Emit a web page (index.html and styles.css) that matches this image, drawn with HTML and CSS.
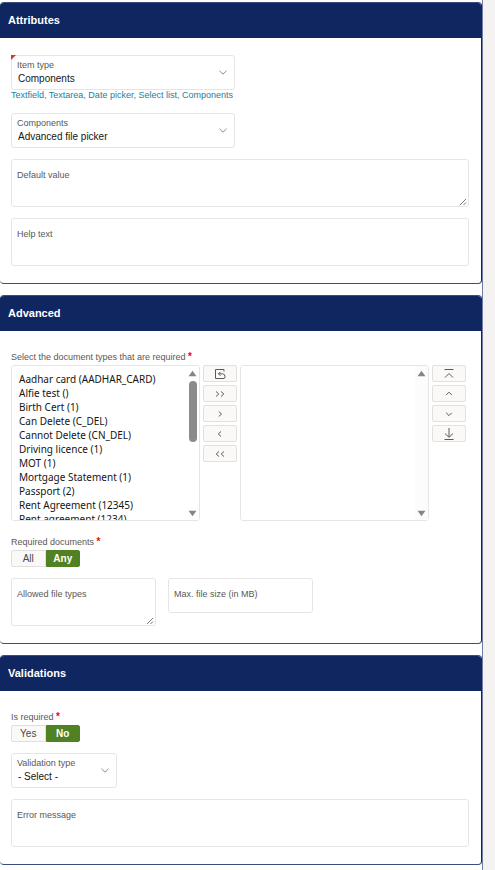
FILE: index.html
```
<!DOCTYPE html>
<html lang="en">
<head>
  <meta charset="UTF-8">
  <title>Item attributes</title>
  <link rel="stylesheet" href="styles.css">
</head>
<body>
  <form class="panel">

    <!-- Attributes -->
    <section class="region">
      <h2>Attributes</h2>
      <div class="region-body">
        <div class="field medium required">
          <label for="itemType">Item type</label>
          <select id="itemType"><option>Components</option></select>
          <svg class="chevron" viewBox="0 0 8 5"><path d="M0.5 0.8 L4 4.2 L7.5 0.8"/></svg>
        </div>
        <p class="help">Textfield, Textarea, Date picker, Select list, Components</p>
        <div class="field medium">
          <label for="components">Components</label>
          <select id="components"><option>Advanced file picker</option></select>
          <svg class="chevron" viewBox="0 0 8 5"><path d="M0.5 0.8 L4 4.2 L7.5 0.8"/></svg>
        </div>
        <div class="field tall">
          <label for="defaultValue">Default value</label>
          <textarea id="defaultValue"></textarea>
          <svg class="grip" viewBox="0 0 8 8"><path d="M1 7 L7 1 M4.5 7 L7 4.5"/></svg>
        </div>
        <div class="field tall last">
          <label for="helpText">Help text</label>
          <textarea id="helpText"></textarea>
        </div>
      </div>
    </section>

    <!-- Advanced -->
    <section class="region">
      <h2>Advanced</h2>
      <div class="region-body captioned">
        <label class="caption" for="docTypes">Select the document types that are required <span class="star">*</span></label>
        <div class="shuttle">
          <div class="list">
            <select id="docTypes" multiple>
              <option>Aadhar card (AADHAR_CARD)</option>
              <option>Alfie test ()</option>
              <option>Birth Cert (1)</option>
              <option>Can Delete (C_DEL)</option>
              <option>Cannot Delete (CN_DEL)</option>
              <option>Driving licence (1)</option>
              <option>MOT (1)</option>
              <option>Mortgage Statement (1)</option>
              <option>Passport (2)</option>
              <option>Rent Agreement (12345)</option>
              <option>Rent agreement (1234)</option>
            </select>
            <div class="scrollbar">
              <svg viewBox="0 0 8 6"><path d="M4 0.5 L7.5 5.5 H0.5 Z"/></svg>
              <span class="thumb"></span>
              <svg class="down" viewBox="0 0 8 6"><path d="M4 5.5 L7.5 0.5 H0.5 Z"/></svg>
            </div>
          </div>
          <div class="controls">
            <button type="button" aria-label="Reset">
              <svg viewBox="0 0 12 12"><path d="M10 3.5 V1.5 H1.5 V10.5 H10 Q11 10.5 11 8.5 Q11 5.8 8.5 5.8 H4.5 M6.5 3.8 L4.5 5.8 L6.5 7.8"/></svg>
            </button>
            <button type="button" aria-label="Move all">
              <svg viewBox="0 0 12 12"><path d="M2 3.5 L4.8 6 L2 8.5 M7 3.5 L9.8 6 L7 8.5"/></svg>
            </button>
            <button type="button" aria-label="Move">
              <svg viewBox="0 0 12 12"><path d="M4.8 3.5 L7.5 6 L4.8 8.5"/></svg>
            </button>
            <button type="button" aria-label="Remove">
              <svg viewBox="0 0 12 12"><path d="M7 3.5 L4.3 6 L7 8.5"/></svg>
            </button>
            <button type="button" aria-label="Remove all">
              <svg viewBox="0 0 12 12"><path d="M5 3.5 L2.2 6 L5 8.5 M10 3.5 L7.2 6 L10 8.5"/></svg>
            </button>
          </div>
          <div class="list">
            <select id="chosenTypes" multiple aria-label="Selected document types"></select>
            <div class="scrollbar track">
              <svg viewBox="0 0 8 6"><path d="M4 0.5 L7.5 5.5 H0.5 Z"/></svg>
              <svg class="down" viewBox="0 0 8 6"><path d="M4 5.5 L7.5 0.5 H0.5 Z"/></svg>
            </div>
          </div>
          <div class="controls">
            <button type="button" aria-label="Top">
              <svg viewBox="0 0 12 12"><path d="M1.5 1.5 H10.5 M2 9.5 L6 5.5 L10 9.5"/></svg>
            </button>
            <button type="button" aria-label="Up">
              <svg viewBox="0 0 12 12"><path d="M3.2 7 L6 4.2 L8.8 7"/></svg>
            </button>
            <button type="button" aria-label="Down">
              <svg viewBox="0 0 12 12"><path d="M3.2 4.8 L6 7.6 L8.8 4.8"/></svg>
            </button>
            <button type="button" aria-label="Bottom">
              <svg viewBox="0 0 12 12"><path d="M6 0 V9 M2 5.5 L6 9.3 L10 5.5 M1.5 11.5 H10.5"/></svg>
            </button>
          </div>
        </div>

        <fieldset class="choice">
          <legend class="caption">Required documents <span class="star">*</span></legend>
          <div class="toggle">
            <label><input type="radio" name="docs"><span>All</span></label>
            <label><input type="radio" name="docs" checked><span>Any</span></label>
          </div>
        </fieldset>

        <div class="row">
          <div class="field tall last">
            <label for="fileTypes">Allowed file types</label>
            <textarea id="fileTypes"></textarea>
            <svg class="grip" viewBox="0 0 8 8"><path d="M1 7 L7 1 M4.5 7 L7 4.5"/></svg>
          </div>
          <div class="field single">
            <label for="maxSize">Max. file size (in MB)</label>
            <input type="text" id="maxSize">
          </div>
        </div>
      </div>
    </section>

    <!-- Validations -->
    <section class="region">
      <h2>Validations</h2>
      <div class="region-body captioned">
        <fieldset class="choice">
          <legend class="caption">Is required <span class="star">*</span></legend>
          <div class="toggle">
            <label><input type="radio" name="isRequired"><span>Yes</span></label>
            <label><input type="radio" name="isRequired" checked><span>No</span></label>
          </div>
        </fieldset>
        <div class="field small">
          <label for="validationType">Validation type</label>
          <select id="validationType"><option>- Select -</option></select>
          <svg class="chevron" viewBox="0 0 8 5"><path d="M0.5 0.8 L4 4.2 L7.5 0.8"/></svg>
        </div>
        <div class="field tall last">
          <label for="errorMessage">Error message</label>
          <textarea id="errorMessage"></textarea>
        </div>
      </div>
    </section>

  </form>
</body>
</html>
```
FILE: styles.css
```
* {
  box-sizing: border-box;
}

body {
  margin: 0;
  padding-right: 12px;
  background-color: #f4f3f1;
  font-family: "Liberation Sans", Arial, sans-serif;
  font-size: 10px;
  color: #161513;
}

.panel {
  display: flex;
  flex-direction: column;
  gap: 11px;
  min-height: 100vh;
  padding-top: 2px;
  background-color: #fff;
  border-right: 1px solid #6f7ca6;
}

.region {
  border: 1px solid #3c4e80;
  border-right-color: #102661;
  border-left-width: 0;
  border-radius: 4px;
  overflow: hidden;
}

h2 {
  margin: 0;
  padding: 0 8px;
  background-color: #102661;
  color: #fff;
  font-size: 11px;
  line-height: 35px;
}

.region-body {
  padding: 17px 12px 17px 11px;
}

.captioned {
  padding-top: 20px;
}

/* Floating label fields */
.field {
  position: relative;
  display: flex;
  flex-direction: column;
  height: 35px;
  margin-bottom: 11px;
  padding: 4px 5px 0;
  border: 1px solid #e6e5e3;
  border-radius: 3px;
}

.field label {
  font-size: 9px;
  line-height: 11px;
  color: #5a5855;
}

.field select,
.field input,
.field textarea {
  width: 100%;
  padding: 0 1px;
  border: none;
  outline: none;
  background: transparent;
  font: inherit;
  color: inherit;
  resize: none;
  appearance: none;
}

.field select {
  height: 15px;
}

.field input {
  height: 12px;
}

.field textarea {
  flex: 1;
  min-height: 0;
}

.medium {
  width: 224px;
}

.small {
  width: 106px;
}

.tall {
  height: 48px;
  padding-top: 10px;
}

.single {
  padding-top: 10px;
}

.last {
  margin-bottom: 0;
}

.required {
  margin-bottom: 0;
}

.required::before {
  content: '';
  position: absolute;
  top: -1px;
  left: -1px;
  border-top: 5px solid #d63b25;
  border-right: 5px solid transparent;
}

.chevron {
  position: absolute;
  right: 7px;
  top: 14px;
  width: 8px;
  height: 5px;
  fill: none;
  stroke: #8a8885;
}

.grip {
  position: absolute;
  right: 1px;
  bottom: 0;
  width: 8px;
  height: 8px;
  fill: none;
  stroke: #777;
}

.help {
  margin: 0 0 12px;
  font-size: 9px;
  line-height: 11px;
  color: #227e9e;
}

/* Shuttle */
.caption {
  display: block;
  padding: 0;
  font-size: 9px;
  line-height: 13px;
  color: #5a5855;
}

.star {
  color: #f00;
  font-size: 10px;
  font-weight: bold;
  line-height: 11px;
}

.shuttle {
  display: flex;
  gap: 3px;
  margin: 1px 0 15px;
}

.list {
  position: relative;
  flex: 1;
  height: 156px;
}

.list select {
  display: block;
  width: 100%;
  height: 100%;
  padding: 6px 7px 0;
  border: 1px solid #e6e5e3;
  border-radius: 3px;
  background-color: #fff;
  font-family: "Noto Sans", sans-serif;
  font-size: 10px;
  color: #161513;
  scrollbar-width: none;
}

.list option {
  min-height: 14px;
  padding: 0;
  line-height: 14px;
}

.scrollbar {
  position: absolute;
  top: 1px;
  right: 1px;
  bottom: 1px;
  width: 13px;
  display: flex;
  flex-direction: column;
  align-items: center;
  gap: 4px;
  padding: 4px 0 3px;
}

.scrollbar svg {
  width: 9px;
  height: 7px;
  fill: #858585;
}

.scrollbar .down {
  margin-top: auto;
}

.track {
  background-color: #fcfcfc;
}

.thumb {
  width: 8px;
  height: 61px;
  border-radius: 4px;
  background-color: #8b8b8b;
}

.controls {
  display: flex;
  flex-direction: column;
  gap: 3px;
  width: 34px;
}

.controls:last-child {
  margin-right: 3px;
}

.controls button {
  display: flex;
  align-items: center;
  justify-content: center;
  height: 17px;
  padding: 0;
  border: 1px solid #e2e1df;
  border-radius: 2px;
  background-color: #faf9f7;
}

.controls svg {
  width: 12px;
  height: 12px;
  fill: none;
  stroke: #5c5a58;
}

/* Pill toggles */
.choice {
  margin: 0 0 11px;
  padding: 0;
  border: none;
}

.toggle {
  display: flex;
  width: 69px;
  margin-top: 1px;
}

.toggle label {
  flex: 1;
}

.toggle input {
  position: absolute;
  opacity: 0;
}

.toggle span {
  display: block;
  height: 17px;
  border: 1px solid #e0dfdd;
  border-radius: 2px 0 0 2px;
  background-color: #faf9f7;
  text-align: center;
  line-height: 15px;
  color: #4a4846;
}

.toggle input:checked + span {
  border-color: #508223;
  border-radius: 0 2px 2px 0;
  background-color: #508223;
  color: #fff;
  font-weight: bold;
}

.row {
  display: flex;
  gap: 12px;
}

.row .field {
  width: 145px;
}
```
